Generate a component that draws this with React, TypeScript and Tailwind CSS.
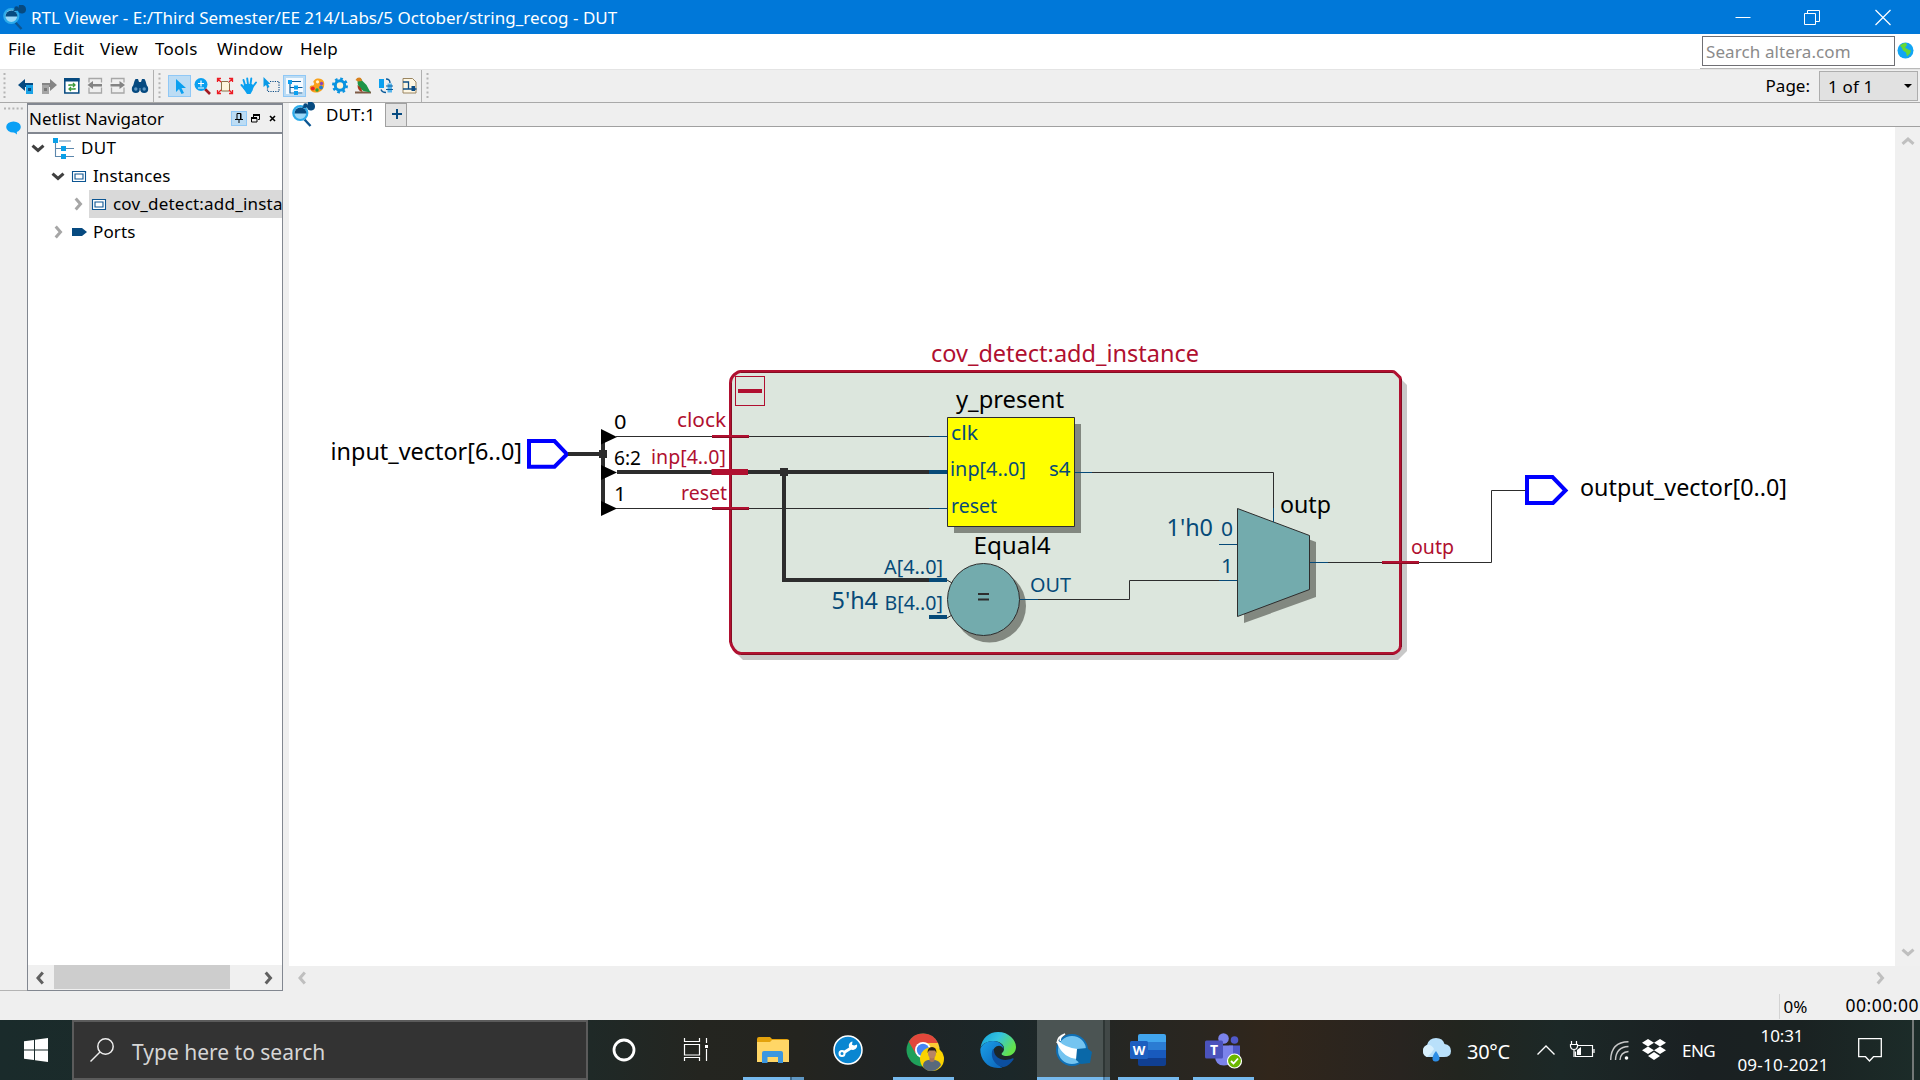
import React from "react";

type Kids = { children?: React.ReactNode };

function Glyph({ w = 18, h = 18, className = "", children }: Kids & { w?: number; h?: number; className?: string }) {
  return (
    <svg width={w} height={h} viewBox={`0 0 ${w} ${h}`} className={`block shrink-0 overflow-visible ${className}`} fill="none">
      {children}
    </svg>
  );
}

function Chevron({ dir, color }: { dir: "left" | "right" | "up" | "down"; color: string }) {
  const d = {
    left: "M9.8 1.5L5 7l4.800 5.500",
    right: "M4.700 1.500l4.800 5.500-4.800 5.500",
    up: "M1.500 9.800L7 5l5.500 4.800",
    down: "M1.500 4.700L7 9.500l5.500-4.800",
  }[dir];
  return (
    <Glyph w={14} h={14}>
      <path d={d} stroke={color} strokeWidth="3" />
    </Glyph>
  );
}

function Magnifier() {
  return (
    <Glyph w={24} h={24}>
      <path d="M12.500 17.500l6 6.500" stroke="#0b5592" strokeWidth="2.400" />
      <circle cx="8.300" cy="11" r="7" fill="#9bd8f8" stroke="#2cabea" strokeWidth="2.200" />
      <path d="M2.500 11.500a6 6 0 0 1 12 0z" fill="#064a80" />
      <path d="M10.500 5.500l8-2" stroke="#064a80" strokeWidth="1.500" />
      <circle cx="13.500" cy="3.500" r="2.200" fill="#064a80" />
      <path d="M16 0h4q3 1 3 4.500T19.500 8.500 15 5.500z" fill="#064a80" />
    </Glyph>
  );
}

function TitleBar() {
  return (
    <header className="flex h-[34px] shrink-0 items-center bg-[#0078d9] text-white">
      <div className="ml-[3px] w-7">
        <Magnifier />
      </div>
      <span className="whitespace-nowrap text-[17px] tracking-[0.02px]">
        RTL Viewer - E:/Third Semester/EE 214/Labs/5 October/string_recog - DUT
      </span>
      <div className="ml-auto flex items-center pb-px pr-[29px]">
        <Glyph w={16} h={16}>
          <path d="M0.5 8.5h15" stroke="#fff" />
        </Glyph>
        <Glyph w={16} h={16} className="ml-[53px]">
          <path d="M.5 4.5h11v11H.5zM3.5 4.5v-3h12v11h-4" stroke="#fff" />
        </Glyph>
        <Glyph w={16} h={16} className="ml-[55px]">
          <path d="M.5 1l15 15M15.5 1L.5 16" stroke="#fff" strokeWidth="1.2" />
        </Glyph>
      </div>
    </header>
  );
}

function MenuBar() {
  return (
    <nav className="flex h-[35px] shrink-0 bg-white text-[17px]">
      <div className="flex h-[28px] items-center pl-2 tracking-[0.25px]">
        <span className="w-[45px]">File</span>
        <span className="w-[47px]">Edit</span>
        <span className="w-[55px]">View</span>
        <span className="w-[62px]">Tools</span>
        <span className="w-[83px]">Window</span>
        <span>Help</span>
      </div>
      <div className="ml-auto flex w-[220px] items-start border-b border-[#b9b9b9] pl-[2px] pt-[2px]">
        <div className="flex h-[30px] w-[193px] items-center whitespace-nowrap border border-[#6f6f74] bg-white pl-[3px] tracking-[0.1px] text-[#8b8b8b]">
          Search altera.com
        </div>
        <Glyph w={17} h={17} className="ml-[2px] mt-[6px]">
          <circle cx="8.5" cy="8.5" r="8" fill="#12a5f4" />
          <path d="M3 3.5q3-3 6-2.5l1 2-2 2.5 3 2 3 1-1 3-3 3-1-4-3-2-1-2.500z" fill="#66d834" />
        </Glyph>
      </div>
    </nav>
  );
}

function Handle() {
  return (
    <Glyph w={3} h={28}>
      <path d="M1.500 1v26" stroke="#b4b4b4" strokeWidth="2" strokeDasharray="2 2.600" />
    </Glyph>
  );
}

function Cell({ active = false, children }: Kids & { active?: boolean }) {
  return (
    <div className={active ? "flex h-[22px] w-[23px] items-center justify-center border border-[#90c8f6] bg-[#bcdcf4]" : "flex h-[22px] w-[23px] items-center justify-center"}>
      {children}
    </div>
  );
}

function Toolbar() {
  return (
    <div className="flex h-[34px] shrink-0 items-center border-b border-t border-b-[#a9a9a9] border-t-[#e4e4e4] bg-[#efefef]">
      <div className="flex w-[14px] pl-[3px]"><Handle /></div>
      <Cell>
        <Glyph>
          <path d="M1 8l7-6v4h8v4H8v4z" fill="#064a80" />
          <path d="M9 8h7v9H9z" fill="#1aa2e6" />
          <path d="M11 11h3v3h-3z" fill="#064a80" />
        </Glyph>
      </Cell>
      <Cell>
        <Glyph>
          <path d="M17 8l-7-6v4H2v4h8v4z" fill="#858585" />
          <path d="M2 8h7v9H2z" fill="#a5a5a5" />
          <path d="M4 11h3v3H4z" fill="#777" />
        </Glyph>
      </Cell>
      <Cell>
        <Glyph>
          <path d="M1.800 2h14v14h-14z" fill="#fff" stroke="#064a80" strokeWidth="1.500" />
          <path d="M1 1h15.500v3.500H1z" fill="#064a80" />
          <path d="M6 9V8h5.500M10 6l2 2-2 2M12 11v1H6.500M8 10l-2 2 2 2" stroke="#3c9b3c" strokeWidth="1.300" />
        </Glyph>
      </Cell>
      <Cell>
        <Glyph>
          <path d="M3 5.500v-4h12.500v4M3 10.500V16h12.500v-5.500" stroke="#a7a7a7" strokeWidth="1.300" />
          <path d="M1.500 8L7 4v3h9v2.500H7V12z" fill="#838383" />
        </Glyph>
      </Cell>
      <Cell>
        <Glyph>
          <path d="M2.500 5.500v-4H15v4M2.500 10.500V16H15v-5.500" stroke="#a7a7a7" strokeWidth="1.300" />
          <path d="M16 8l-5.500-4v3h-9v2.500h9V12z" fill="#838383" />
        </Glyph>
      </Cell>
      <Cell>
        <Glyph className="-ml-px">
          <path d="M3.500 4l1-2h2.500l1 3h2l1-3h2.500l1 2 2 7H1.500z" fill="#064a80" />
          <circle cx="4.800" cy="12" r="4" fill="#064a80" />
          <circle cx="13.200" cy="12" r="4" fill="#064a80" />
          <circle cx="4.800" cy="12" r="1.700" fill="#5e98c4" />
          <circle cx="13.200" cy="12" r="1.700" fill="#5e98c4" />
        </Glyph>
      </Cell>
      <div className="flex h-full w-[16px] items-center pl-[1px]">
        <div className="mr-1 h-full w-px bg-[#b0b0b0]" />
        <Handle />
      </div>
      <Cell active>
        <Glyph>
          <path d="M5 2v13l3-3 2.500 5 2.500-1-2.500-5H15z" fill="#0aa0f0" />
        </Glyph>
      </Cell>
      <Cell>
        <Glyph className="-ml-[2px]">
          <path d="M12 12l5 5" stroke="#a31a22" strokeWidth="2.600" />
          <circle cx="8" cy="7.500" r="6.500" fill="#0aa0f0" />
          <path d="M5 6.500h6M8 3.500v6M5 11h6" stroke="#fff" strokeWidth="1.200" />
        </Glyph>
      </Cell>
      <Cell>
        <Glyph className="-ml-[2px]">
          <path d="M5.500 4.500h6.500l1.500 2V14h-8z" fill="#fdf5dc" stroke="#8a7348" />
          <path d="M1.500 5V1.500H5M1.500 1.500L5 5M13 1.500h3.500V5M16.500 1.500L13 5M1.500 13v3.500H5M1.500 16.500L5 13M13 16.500h3.500V13M16.500 16.500L13 13" stroke="#ec1c24" strokeWidth="1.300" />
        </Glyph>
      </Cell>
      <Cell>
        <Glyph>
          <path d="M5 8L3.500 3M8 7.500L7.200 1.500M10.500 7.500l.8-6M13 9.500l3-4M5 12L1.500 8" stroke="#0aa0f0" strokeWidth="1.900" strokeLinecap="round" />
          <path d="M4 7h8l2 2-1.500 4.500L10.500 17H7l-4-6z" fill="#0aa0f0" />
        </Glyph>
      </Cell>
      <Cell>
        <Glyph className="-ml-px">
          <path d="M8 4.500h9v10H5.500V9" stroke="#0c4d85" strokeWidth="1.200" strokeDasharray="1.200 1.200" />
          <path d="M1.500 0v10l2.500-2 1.500 3 2-1L6 7h2.500z" fill="#0a9ae6" />
        </Glyph>
      </Cell>
      <Cell active>
        <div className="flex h-full w-full items-center justify-center p-[2px]">
          <div className="flex h-full w-full items-center justify-center bg-[#f5faff]">
            <Glyph>
              <path d="M4 5v11h12.500M4 10.500h12.500M5 4.500h10" stroke="#0c5c9b" strokeWidth="1.200" />
              <path d="M2 3h4v4H2zM8 8.500h4v4H8zM8 14h4v4H8z" fill="#0aa0f0" />
            </Glyph>
          </div>
        </div>
      </Cell>
      <Cell>
        <Glyph w={16} h={18} className="-ml-[2px]">
          <path d="M9.500 1.500c5 0 6.500 4 5.500 8s-5 6.500-9 6-6-4-5-6 3 0 4-2-2-2 0-4 2.500-2 4.500-2z" fill="#f9a11c" />
          <circle cx="8.500" cy="4.800" r="1.600" fill="#fff3d0" />
          <circle cx="12.500" cy="6.500" r="1.700" fill="#8b44b7" />
          <circle cx="12" cy="10.500" r="1.900" fill="#1d7fd6" />
          <circle cx="8" cy="13" r="1.700" fill="#2da23a" />
          <circle cx="3.800" cy="11.500" r="2" fill="#e5252b" />
        </Glyph>
      </Cell>
      <Cell>
        <Glyph className="-ml-px">
          <circle cx="9" cy="8.500" r="6.700" stroke="#0a93e0" strokeWidth="2.600" strokeDasharray="2.630 2.630" />
          <circle cx="9" cy="8.500" r="4.700" fill="#fff4d8" stroke="#0a93e0" strokeWidth="3" />
        </Glyph>
      </Cell>
      <Cell>
        <Glyph className="-ml-px">
          <path d="M1 15.500h16" stroke="#7d5a45" strokeWidth="2" />
          <path d="M3.500 3Q7 0 8.500 4l4 4 4 7.500-7-1.500Q3 11 3.500 3z" fill="#1d9447" />
          <path d="M1.500 3q2-3.500 5.500-2l1 3-4 .5z" fill="#d8801c" />
          <path d="M3.500 8q0 6 5 7l-1.500-4z" fill="#a5391c" />
        </Glyph>
      </Cell>
      <Cell>
        <Glyph className="-ml-[2px]">
          <path d="M2 2h5v9H2z" fill="#0aa0f0" />
          <path d="M9 2q4 0 4 4M9 15.500q-4 0-5-3" stroke="#0c5c9b" strokeWidth="1.400" />
          <path d="M10.500 6.500h4.500v9h-4.500z" fill="#55b4ec" />
          <path d="M9 9h7M9 12.500h7" stroke="#0c5c9b" strokeWidth="1.200" />
        </Glyph>
      </Cell>
      <Cell>
        <Glyph className="-ml-[2px]">
          <path d="M3 1.500h9.500l3.500 3.500v11H3z" fill="#fdf6e3" stroke="#9a8560" />
          <path d="M3 5h5.500v7h8M3 12h5.500" stroke="#0c4d85" strokeWidth="1.300" />
          <path d="M11.500 9h3.500v5h-3.500z" fill="#0c4d85" />
        </Glyph>
      </Cell>
      <div className="flex h-full items-center">
        <div className="mr-1 h-full w-px bg-[#b0b0b0]" />
        <Handle />
      </div>
      <span className="ml-auto mr-[9px] pb-px text-[17px]">Page:</span>
      <div className="mr-[2px] flex h-[30px] w-[99px] items-center justify-between border border-[#adadad] bg-[#e1e1e1] pl-[8px] pr-[5px] text-[17px]">
        <span className="tracking-[0.15px]">1 of 1</span>
        <Glyph w={8} h={4}>
          <path d="M0 0h8L4 4z" fill="#000" />
        </Glyph>
      </div>
    </div>
  );
}

function InstanceIcon() {
  return (
    <Glyph w={15} h={11}>
      <path d="M.5.5h13v10H.5zM3 3h8v5H3z" stroke="#0c5592" strokeWidth="1.100" fill="#fff" />
    </Glyph>
  );
}

function Navigator() {
  return (
    <aside className="flex w-[256px] shrink-0 flex-col border border-t-2 border-[#828790] bg-white">
      <div className="flex h-[29px] shrink-0 items-center border-b-2 border-[#828790] bg-[#efefef] pb-px pl-px text-[17px]">
        <span className="whitespace-nowrap">Netlist Navigator</span>
        <div className="ml-auto flex h-[15px] w-4 items-center justify-center border border-[#90c8f6] bg-[#bcdcf4]">
          <Glyph w={8} h={10}>
            <path d="M2 6V.5h4V6M5.500 1v5M0 6.500h8M4 7v3" stroke="#000" />
          </Glyph>
        </div>
        <Glyph w={9} h={9} className="ml-1">
          <path d="M2.500 3V1h6v4.500H7M.5 4.500h5.500V8H.5z" stroke="#000" />
          <path d="M2 1h7M0 4h6" stroke="#000" strokeWidth="1.800" />
        </Glyph>
        <Glyph w={7} h={7} className="ml-[9px] mr-[6px]">
          <path d="M1 1l5 5M6 1L1 6" stroke="#000" strokeWidth="1.600" />
        </Glyph>
      </div>
      <ul className="flex flex-1 flex-col text-[17px]">
        <li className="flex h-7 items-center pl-[3px]">
          <Chevron dir="down" color="#404040" />
          <Glyph w={22} h={21} className="ml-[8px] mr-[6px]">
            <path d="M2.500 2v17M2.500 10.500H21M2.500 18.500H21M6 3h12" stroke="#5c87ac" strokeWidth="1.100" />
            <path d="M0 0h5v5H0zM8 8h5v5H8zM8 16h5v5H8z" fill="#0aa0e8" />
          </Glyph>
          <span className="pb-px tracking-[0.3px]">DUT</span>
        </li>
        <li className="flex h-7 items-center pl-[23px]">
          <Chevron dir="down" color="#404040" />
          <div className="ml-[7px] mr-[6px]"><InstanceIcon /></div>
          <span className="pb-px tracking-[0.1px]">Instances</span>
        </li>
        <li className="flex h-7 items-center overflow-hidden pl-[43px]">
          <Chevron dir="right" color="#a6a6a6" />
          <div className="ml-[4px] flex h-7 w-[300px] shrink-0 items-center bg-[#d9d9d9] pl-[3px]">
            <InstanceIcon />
            <span className="ml-[6px] whitespace-nowrap pb-px tracking-[0.2px]">cov_detect:add_instance</span>
          </div>
        </li>
        <li className="flex h-7 items-center pl-[23px]">
          <Chevron dir="right" color="#a6a6a6" />
          <Glyph w={15} h={8} className="ml-[7px] mr-[6px]">
            <path d="M0 0h10l5 4-5 4H0z" fill="#064a80" />
          </Glyph>
          <span className="pb-px tracking-[0.15px]">Ports</span>
        </li>
      </ul>
      <div className="flex h-[25px] shrink-0 items-center bg-[#f0f0f0] pl-[5px] pr-[7px]">
        <Chevron dir="left" color="#606060" />
        <div className="ml-[7px] h-6 w-[176px] self-start bg-[#cdcdcd]" />
        <div className="ml-auto"><Chevron dir="right" color="#606060" /></div>
      </div>
    </aside>
  );
}

function T({ x, y, w, s = 23, c = "#000", children }: { x: number; y: number; w: number; s?: number; c?: string; children: string }) {
  return (
    <text x={x} y={y} textLength={w} fontSize={s} fill={c} lengthAdjust="spacingAndGlyphs">
      {children}
    </text>
  );
}

const RED = "#b01030";
const BLUE = "#064a78";
const INK = "#2d2d2d";

function Schematic() {
  return (
    <svg width="1606" height="840" viewBox="289 127 1606 840" className="block" fill="none">
      <path d="M745 375h652l10 10v266l-9 9H743l-8-8V385z" fill="#c8c8c8" />
      <path d="M741 371.500h651q2 0 3 1l5 5q.5 1 .5 3v265q0 3-2 5t-5 3H741q-4 0-7-4t-3.500-8V383q0-5 4-8.500t6.500-3z" fill="#dce6dd" stroke={RED} strokeWidth="3" />
      <path d="M741 372.500h652M1401.500 379v268M741 654.500h652M731.500 383v260" stroke="#850c22" />
      <rect x="735.500" y="376.500" width="29" height="29" stroke={RED} />
      <path d="M738 391h24" stroke={RED} strokeWidth="4" />

      <path d="M529 441h25.500l12.500 13.200-12.500 12.500H529z" fill="#fff" stroke="#00f" strokeWidth="4" />
      <path d="M1527 477h25.500l13 13.500-12.500 12.500h-26z" fill="#fff" stroke="#00f" strokeWidth="4" />

      <path d="M568 454h35M603 437v72M617 472h312M784 472v110M782 580h147" stroke={INK} strokeWidth="4" />
      <path d="M599 450h8v8h-8zM780 468h8v8h-8z" fill={INK} />
      <path d="M601 429v15.500l16-7.500zM601 465v15l16-7.500zM601 501v15l16-7.500z" fill="#000" />
      <path d="M616 436.500h313M616 508.500h166M786 508.500h143M1092 472.500h181.500V508M1038 599.500h91.500v-19h90M1328 562.500h163.500v-72h34" stroke={INK} />
      <path d="M712 436.500h37M712 508.500h37M1382 562.500h37" stroke={RED} strokeWidth="3" />
      <path d="M711.500 472h36.500" stroke={RED} strokeWidth="6" />
      <path d="M712 437.500h37M712 509.500h37M1382 563.500h37" stroke="#850c22" />

      <path d="M954 424h127v109H954z" fill="#828880" />
      <path d="M947.500 417.500h127v109h-127z" fill="#ff0" stroke={INK} />
      <circle cx="989.500" cy="606" r="36.500" fill="#828880" />
      <path d="M947 580l5 3M947 618l5-3" stroke={INK} />
      <circle cx="983.500" cy="599.500" r="36" fill="#73abad" stroke={INK} />
      <path d="M1244 515l72 27v55l-72 26z" fill="#828880" />
      <path d="M1237.500 508.500l72 27v54l-72 27z" fill="#73abad" stroke={INK} />

      <path d="M929 472h18M929 580h18M929 617h18" stroke={BLUE} strokeWidth="4" />
      <path d="M929 436.500h18M929 508.500h18M1075 472.500h17M1020 599.500h18M1219 544.500h18M1219 580.500h18M1310 562.500h18M1273.500 508v14" stroke={BLUE} />

      <T x={330.5} y={460} w={191.5}>input_vector[6..0]</T>
      <T x={1580} y={496} w={207}>output_vector[0..0]</T>
      <T x={931} y={361.5} w={268}>{""}</T>
      <T x={931} y={361.5} w={268} c={RED}>cov_detect:add_instance</T>
      <T x={956} y={407.5} w={108}>y_present</T>
      <T x={973.5} y={553.5} w={77}>Equal4</T>
      <T x={1280} y={513} w={51}>outp</T>
      <T x={614} y={429} w={12.5} s={19}>0</T>
      <T x={614} y={465} w={27} s={19}>6:2</T>
      <T x={614} y={501} w={12} s={19}>1</T>
      <T x={677} y={427} w={49} s={19.5} c={RED}>clock</T>
      <T x={651} y={464} w={75} s={19.5} c={RED}>inp[4..0]</T>
      <T x={681} y={500} w={46} s={19.5} c={RED}>reset</T>
      <T x={1411} y={554} w={43} s={19.5} c={RED}>outp</T>
      <T x={951} y={440} w={27} s={19.5} c={BLUE}>clk</T>
      <T x={950} y={476} w={76} s={19.5} c={BLUE}>inp[4..0]</T>
      <T x={1049} y={476} w={21.5} s={19.5} c={BLUE}>s4</T>
      <T x={951} y={513} w={46} s={19.5} c={BLUE}>reset</T>
      <T x={884} y={574} w={59} s={19.5} c={BLUE}>A[4..0]</T>
      <T x={884.5} y={610} w={58.5} s={19.5} c={BLUE}>B[4..0]</T>
      <T x={831.5} y={609} w={46.5} c={BLUE}>5'h4</T>
      <T x={1030} y={592} w={41} s={19.5} c={BLUE}>OUT</T>
      <T x={1166.5} y={536} w={46.5} c={BLUE}>1'h0</T>
      <T x={1221} y={536} w={12} s={19} c={BLUE}>0</T>
      <T x={1221} y={573} w={12} s={19} c={BLUE}>1</T>
      <path d="M978 594h11M978 599.500h11" stroke={INK} strokeWidth="2" />
    </svg>
  );
}

function Workspace() {
  return (
    <main className="flex min-w-0 flex-1 flex-col pl-[6px]">
      <div className="flex h-[24px] shrink-0 border-b border-[#a0a0a0]">
        <div className="flex h-[24px] w-[97px] items-center border-r border-[#a0a0a0] bg-white pb-[2px] pl-[3px]">
          <Magnifier />
          <span className="ml-[10px] whitespace-nowrap text-[17px] tracking-[0.1px]">DUT:1</span>
        </div>
        <div className="flex h-[24px] w-[21px] items-center justify-center border border-l-0 border-[#a0a0a0] bg-[#e3e3e3] pb-[2px]">
          <Glyph w={10} h={10} className="ml-px">
            <path d="M5 0v10M0 5h10" stroke="#064a80" strokeWidth="2" />
          </Glyph>
        </div>
      </div>
      <div className="flex h-[839px] shrink-0">
        <div className="h-[839px] w-[1606px] overflow-hidden bg-white">
          <Schematic />
        </div>
        <div className="flex flex-1 flex-col items-center justify-between bg-[#f0f0f0] pb-[7px] pt-[7px]">
          <Chevron dir="up" color="#bfbfbf" />
          <Chevron dir="down" color="#bfbfbf" />
        </div>
      </div>
      <div className="flex h-6 items-center justify-between pl-[6px] pr-[33px]">
        <Chevron dir="left" color="#bfbfbf" />
        <Chevron dir="right" color="#bfbfbf" />
      </div>
    </main>
  );
}

function Task({ bar = "", cls = "", children }: Kids & { bar?: string; cls?: string }) {
  return (
    <div className={`flex h-[60px] shrink-0 flex-col items-center ${cls}`}>
      <div className="flex h-[57px] items-center pt-[2px]">{children}</div>
      <div className={`h-[3px] w-full ${bar}`} />
    </div>
  );
}

function Taskbar() {
  return (
    <footer className="flex h-[60px] shrink-0 overflow-hidden bg-[linear-gradient(90deg,#1a2b2b_0px,#1f2927_590px,#242520_700px,#24241f_800px,#1f2425_900px,#1b2729_1010px,#262622_1130px,#2a2620_1200px,#31261b_1270px,#282420_1400px,#22251f_1460px,#1c2827_1560px,#1a2022_1700px,#1a2222_1800px,#1c2c29_1920px)] text-white">
      <div className="flex w-[72px] items-center pl-6">
        <Glyph w={24} h={24}>
          <path d="M0 3.300L10 2v9.500H0zM11 1.800L24 0v11.500H11zM0 12.500h10V22L0 20.700zM11 12.500h13V24l-13-1.800z" fill="#fff" />
        </Glyph>
      </div>
      <div className="flex w-[516px] items-center border-2 border-[#5b5b5b] bg-[#333] pl-4">
        <Glyph w={24} h={24}>
          <circle cx="15.500" cy="8.500" r="7.700" stroke="#eee" strokeWidth="1.500" />
          <path d="M10 14L.5 23.500" stroke="#eee" strokeWidth="1.500" />
        </Glyph>
        <span className="ml-[18px] whitespace-nowrap pt-[4px] text-[21px] text-[#d6d6d6]">Type here to search</span>
      </div>
      <Task cls="w-[72px]">
        <Glyph w={24} h={24}><circle cx="12" cy="12" r="10" stroke="#fff" strokeWidth="2.800" /></Glyph>
      </Task>
      <Task cls="w-[72px]">
        <Glyph w={24} h={24}>
          <path d="M.5 0v3.500h15V0M.5 23v-3.500h15V23M.5 6.500h15v10.500H.5zM22.500 0v5M22.500 11v12" stroke="#fff" strokeWidth="1.200" />
          <path d="M21 7h3v3h-3z" fill="#fff" />
        </Glyph>
      </Task>
      <Task cls="ml-[11px] w-[61px]" bar="bg-[linear-gradient(90deg,#76b9ed_47px,#3f6a8b_47px,#3f6a8b_49px,#5f97c3_49px)]">
        <Glyph w={32} h={26} className="-ml-[2px]">
          <path d="M0 2q0-2 2-2h11l2 2h15q2 0 2 2v19q0 2-2 2H0z" fill="#e3a20c" />
          <path d="M0 5h13l2-2h17v22H0z" fill="#ffd666" />
          <path d="M5 26V16q0-2 2-2h17q2 0 2 2v10h-5v-6H10.500v6z" fill="#3b97e0" />
        </Glyph>
      </Task>
      <Task cls="ml-2 w-[72px]">
        <Glyph w={30} h={30} className="ml-[-1px]">
          <circle cx="15" cy="15" r="14" fill="#0a86d1" stroke="#fff" strokeWidth="1.500" />
          <path d="M11 17.500l7-4.500" stroke="#fff" strokeWidth="3" />
          <path d="M24 9.500a4.200 4.200 0 1 1-4.500-3l-.5 3.300 2.200.8z" fill="#fff" />
          <circle cx="9" cy="18.500" r="2.500" stroke="#fff" strokeWidth="2" fill="#0a86d1" />
        </Glyph>
      </Task>
      <Task cls="ml-[9px] w-[61px]" bar="bg-[#76b9ed]">
        <Glyph w={34} h={34} className="-ml-[2px]">
          <circle cx="17" cy="17" r="16.500" fill="#1fa05a" />
          <path d="M2.700 8.800A16.500 16.500 0 0 1 32 10H17l-7 11z" fill="#e2473b" />
          <path d="M17 10h15a16.500 16.500 0 0 1-14 23.500l8-14z" fill="#fcc934" />
          <circle cx="17" cy="17" r="8" fill="#fff" />
          <circle cx="17" cy="17" r="6.200" fill="#4486f4" />
          <circle cx="26" cy="26" r="12" fill="#fbd300" />
          <path d="M17 33q0-5 5-6h7q5 1 6 5-4 6-10 6t-8-5z" fill="#58697c" />
          <path d="M23.500 24h5v4q-2.500 2-5 0z" fill="#a8765a" />
          <ellipse cx="26" cy="20.500" rx="4" ry="5" fill="#b98463" />
          <path d="M21.500 20q0-6 4.500-6t4.500 6l-1.500-2.500h-6z" fill="#241c1a" />
        </Glyph>
      </Task>
      <Task cls="ml-[9px] w-[72px]">
        <svg width="36" height="36" viewBox="0 0 36 36" className="ml-[-3px] block" fill="none">
          <defs>
            <linearGradient id="edgeTop" x1="0" y1="0" x2="1" y2=".5">
              <stop offset="0" stopColor="#0f9fd9" /><stop offset=".5" stopColor="#35c3e0" /><stop offset="1" stopColor="#63e24b" />
            </linearGradient>
            <linearGradient id="edgeLow" x1="0" y1="0" x2="1" y2="1">
              <stop offset="0" stopColor="#1aa0e8" /><stop offset="1" stopColor="#0c62b8" />
            </linearGradient>
          </defs>
          <path d="M.5 16C2 6 9 0 18 0c11 0 18 8 18 15 0 6-5 9-9 9-5 0-6-2-5-3 2-2 2-3 2-5 0-3-4-7-10-7C7 9 2 12 .5 16z" fill="url(#edgeTop)" />
          <path d="M.3 17C2 12 7 9 13 9c7 0 11 5 10.500 8-2-4-6-4-9-1-4 4-2 15 8 19.500-2 .5-3 .5-4.500.5C7 36 0 27 .3 17z" fill="url(#edgeLow)" />
          <path d="M13 17c-4 8 3 18 11 18 4-1 7-4 9.500-7.500.500-1-.5-1.500-1.500-1-9 4-18-1-18-8z" fill="#0c4f9f" />
        </svg>
      </Task>
      <Task cls="ml-[2px] w-[73px] bg-[linear-gradient(90deg,#4b5453_66px,#2e3635_66px,#2e3635_68px,#414847_68px)]" bar="bg-[linear-gradient(90deg,#76b9ed_66px,#4d7ca3_66px,#4d7ca3_68px,#5f97c3_68px)]">
        <Glyph w={36} h={34}>
          <circle cx="16" cy="17" r="15" fill="#74c4f0" stroke="#0f6fb5" strokeWidth="2" />
          <path d="M1.500 7q8 8 20 9v10Q7 25 1 10z" fill="#fff" />
          <path d="M1 10Q2 3 9 1q-6 4-4.500 7" stroke="#fff" strokeWidth="1.500" />
          <path d="M21 16l10-1 5 4-2 11-9 1-5-4z" fill="#0a68a8" />
        </Glyph>
      </Task>
      <Task cls="ml-2 w-[61px]" bar="bg-[#76b9ed]">
        <Glyph w={36} h={32} className="ml-[-2px]">
          <path d="M10 0h24q2 0 2 2v6H8V2q0-2 2-2z" fill="#41a5ee" />
          <path d="M8 8h28v8H8z" fill="#2b7cd3" />
          <path d="M8 16h28v8H8z" fill="#185abd" />
          <path d="M8 24h28v6q0 2-2 2H10q-2 0-2-2z" fill="#103f91" />
          <rect y="7" width="18" height="18" rx="1.500" fill="#1c5fc0" />
          <text x="9" y="20.500" fontSize="13" fontWeight="700" textAnchor="middle" fill="#fff">W</text>
        </Glyph>
      </Task>
      <Task cls="ml-[14px] w-[61px]" bar="bg-[#76b9ed]">
        <Glyph w={38} h={34}>
          <circle cx="29.500" cy="7" r="3.800" fill="#5059c9" />
          <path d="M24 12.500h11v13h-11z" fill="#5059c9" />
          <circle cx="18.500" cy="5.500" r="5.300" fill="#7b83eb" />
          <path d="M10 12.500h18v10q0 10-9 10t-9-10z" fill="#7b83eb" />
          <rect y="7.500" width="18" height="18" rx="1.500" fill="#4b53bc" />
          <text x="9" y="21.500" fontSize="14" fontWeight="700" textAnchor="middle" fill="#fff">T</text>
          <circle cx="29.500" cy="28" r="7" fill="#6bb700" stroke="#fff" strokeWidth="1.200" />
          <path d="M26 28l2.500 2.500 4.500-5" stroke="#fff" strokeWidth="1.800" />
        </Glyph>
      </Task>
      <div className="ml-auto flex items-center">
        <Glyph w={31} h={24} className="-translate-x-px">
          <path d="M7 19a6.500 6.500 0 0 1 0-12Q9 0 16 0t8.500 6Q31 7 31 13t-7 6z" fill="#b9e0fa" />
          <path d="M7 19a6.500 6.500 0 0 1 0-12 6 6 0 0 1 7 4q-2 4-7 8z" fill="#d9f0fd" />
          <path d="M16 13q3.500 5 3.500 7.500T16 23.500t-3.500-3 3.500-7.500z" fill="#2e8ee6" />
        </Glyph>
        <span className="ml-[15px] w-[70px] whitespace-nowrap pt-[4px] text-[20px] tracking-[-0.3px]">30°C</span>
        <Glyph w={18} h={10}><path d="M.5 9.500L9 1l8.500 8.500" stroke="#fff" strokeWidth="1.400" /></Glyph>
        <Glyph w={25} h={18} className="ml-[15px]">
          <path d="M8 4.500h14.500v11H5.500v-5M24 8v4M1.500 0v3M6.500 0v3M.5 3.500h7v2q-.5 3-3.500 3t-3.500-3zM4 9v7" stroke="#fff" strokeWidth="1.200" />
          <path d="M7 9l4-3v8H7z" fill="#fff" />
        </Glyph>
        <Glyph w={19} h={19} className="ml-[15px]">
          <path d="M.7 19Q1 1 18.500.8M5.500 19q.5-13 13-13.500M10 19q.5-8 8.500-8.500" stroke="#c8c8c8" strokeWidth="1.400" />
          <circle cx="16.500" cy="17" r="1.800" fill="#fff" />
        </Glyph>
        <Glyph w={24} h={22} className="ml-[13px]">
          <path d="M6 0l6 3.700-6 3.700L0 3.700zM18 0l6 3.700-6 3.700-6-3.700zM6 7.500l6 3.700-6 3.700-6-3.700zM18 7.500l6 3.700-6 3.700-6-3.700zM12 13l6 4-6 4-6-4z" fill="#fff" />
        </Glyph>
        <span className="ml-[16px] w-[34px] whitespace-nowrap text-[17px] tracking-[-0.5px]">ENG</span>
        <div className="ml-[12px] flex w-[108px] flex-col items-center text-[17px] leading-7 tracking-[-0.400px]">
          <span className="tracking-[-0.1px]">10:31</span>
          <span className="translate-x-px whitespace-nowrap pt-px tracking-[0.25px]">09-10-2021</span>
        </div>
        <Glyph w={24} h={24} className="ml-[22px]">
          <path d="M.7.700h22.600v18H15.500L11.500 23l-4-4.300H.7z" stroke="#fff" strokeWidth="1.300" />
        </Glyph>
        <div className="ml-[30px] mr-[6px] h-[60px] w-[2px] bg-[#737877]" />
      </div>
    </footer>
  );
}

export default function App() {
  return (
    <div className="flex h-[1080px] w-[1920px] flex-col overflow-hidden bg-[#efefef] font-['Noto_Sans',sans-serif] leading-none text-black">
      <TitleBar />
      <MenuBar />
      <Toolbar />
      <div className="flex h-[888px] shrink-0">
        <div className="flex w-[27px] shrink-0 flex-col items-center border-b border-[#b4b4b4] pt-1">
          <Glyph w={19} h={3}>
            <path d="M0 1.500h19" stroke="#b4b4b4" strokeWidth="2" strokeDasharray="2 2.200" />
          </Glyph>
          <Glyph w={15} h={14} className="-ml-px mt-[11px]">
            <ellipse cx="7.500" cy="6" rx="7.300" ry="5.500" fill="#0aa0f5" />
            <path d="M5 9l6 4.500-.5-5z" fill="#0aa0f5" />
          </Glyph>
        </div>
        <Navigator />
        <Workspace />
      </div>
      <div className="flex h-[29px] shrink-0 items-center justify-end text-[17px]">
        <div className="mr-[4px] mt-[2px] h-[25px] w-px bg-[#d3d3d3]" />
        <span className="w-[62px] pt-px">0%</span>
        <span className="mr-px whitespace-nowrap pt-px text-[17.5px] tracking-[0.5px]">00:00:00</span>
      </div>
      <Taskbar />
    </div>
  );
}
